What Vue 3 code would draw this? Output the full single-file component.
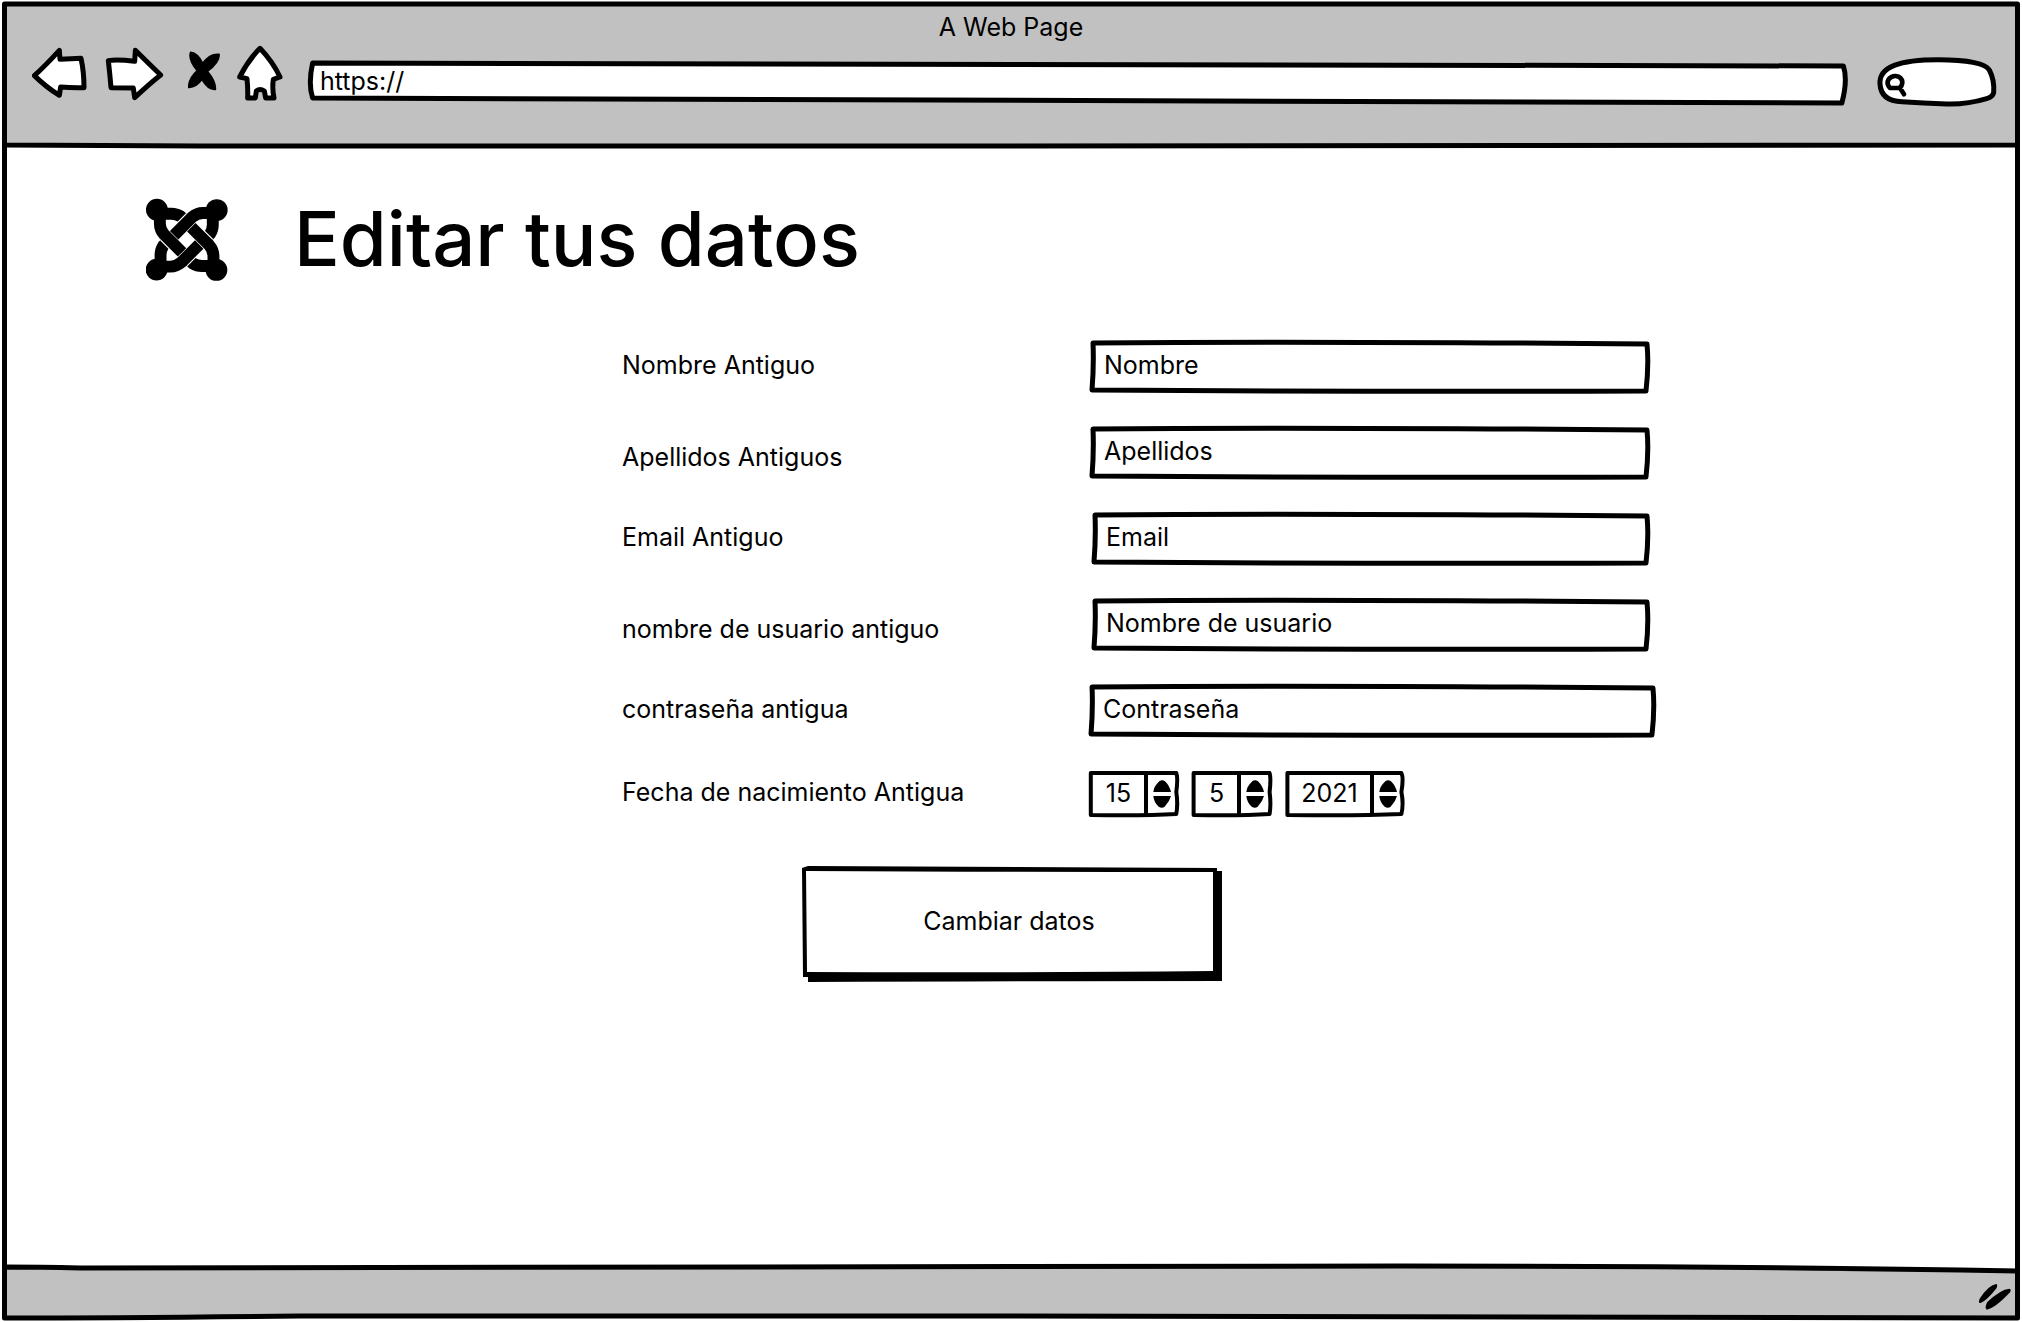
<script setup>
import { reactive } from 'vue'

const fields = [
  { id: 'nombre', label: 'Nombre Antiguo', hint: 'Nombre', type: 'text', size: 'medium' },
  { id: 'apellidos', label: 'Apellidos Antiguos', hint: 'Apellidos', type: 'text', size: 'medium' },
  { id: 'email', label: 'Email Antiguo', hint: 'Email', type: 'email', size: 'small' },
  { id: 'usuario', label: 'nombre de usuario antiguo', hint: 'Nombre de usuario', type: 'text', size: 'small' },
  { id: 'contrasena', label: 'contraseña antigua', hint: 'Contraseña', type: 'password', size: 'large' },
]

const form = reactive({ nombre: '', apellidos: '', email: '', usuario: '', contrasena: '' })

const dateParts = reactive([
  { id: 'dia', name: 'Día', value: 15 },
  { id: 'mes', name: 'Mes', value: 5 },
  { id: 'anio', name: 'Año', value: 2021 },
])

const turns = [0, 90, 180, 270]
</script>

<template>
  <div class="window">
    <header class="chrome">
      <svg class="sketch" viewBox="0 0 4044 148" preserveAspectRatio="none" aria-hidden="true">
        <path class="bar" d="M9 4H4035V145Q2800 147 2020 146Q1000 147 400 146L9 145Z" />
        <path class="line" d="M9 140V148M4035 140V148" />
      </svg>
      <p class="title">A Web Page</p>
      <nav class="toolbar" aria-label="Navegador">
        <button class="tool" type="button" aria-label="Atrás">
          <svg width="56" height="64" viewBox="96 132 168 192">
            <path class="glyph" d="M103 227Q135 198 178 151L180 178Q215 176 243 175Q252 215 252 263Q215 264 182 261L178 286Q140 263 103 227Z" />
          </svg>
        </button>
        <button class="tool" type="button" aria-label="Adelante">
          <svg width="60" height="64" viewBox="312 132 180 192">
            <path class="glyph" d="M325 182Q350 177 404 184L406 151Q445 190 482 225Q450 250 404 293L400 264L333 263Q330 225 325 182Z" />
          </svg>
        </button>
        <button class="tool stop" type="button" aria-label="Detener">
          <svg width="32" height="64" viewBox="564 132 96 192">
            <path class="cross" d="M572 157Q594 160 608 190Q630 160 657 163Q660 186 622 214Q648 245 646 268Q624 270 606 238Q588 263 566 262Q566 235 592 212Q564 178 572 157Z" />
          </svg>
        </button>
        <button class="tool" type="button" aria-label="Inicio">
          <svg width="48" height="64" viewBox="708 132 144 192">
            <path class="glyph" d="M780 145Q818 185 840 231L820 238Q816 265 822 294H797L793 273Q780 264 769 273L766 294H743Q744 265 741 236L719 231Q745 180 780 145Z" />
          </svg>
        </button>
        <label class="address">
          <svg class="sketch" viewBox="0 0 1000 64" preserveAspectRatio="none" aria-hidden="true">
            <path class="frame" d="M3 19Q400 19 997 22Q1000 36 996 59Q500 57 3 54Q0 40 3 19Z" />
          </svg>
          <input type="text" value="https://" aria-label="Dirección" />
        </label>
        <label class="search">
          <svg class="sketch" viewBox="228 132 366 192" aria-hidden="true">
            <path class="glyph" d="M240 252C236 200 300 179 415 179C500 179 556 190 568 210Q584 240 581 278Q578 291 560 296Q500 314 440 312Q370 309 306 305C262 304 242 285 240 252Z" />
            <path class="lens" d="M300 264L312 283M270 264Q258 250 266 238Q275 227 287 228Q305 230 307 246Q306 262 296 264Z" />
          </svg>
          <input type="search" aria-label="Buscar" />
        </label>
      </nav>
    </header>

    <main class="page">
      <div class="heading">
        <svg class="logo" viewBox="78 57 248 249" aria-hidden="true">
          <g class="under">
            <path v-for="t in turns" :key="t" :transform="`rotate(${t} 201 181)`" d="M111 102H155Q170 102 183 110L197 124" />
          </g>
          <g class="gap">
            <path v-for="t in turns" :key="t" :transform="`rotate(${t} 201 181)`" d="M136 168L187 219" />
          </g>
          <g class="over">
            <path v-for="t in turns" :key="t" :transform="`rotate(${t} 201 181)`" d="M120 95V132Q120 150 133 165L187 219" />
          </g>
          <circle v-for="t in turns" :key="t" :transform="`rotate(${t} 201 181)`" cx="111" cy="90" r="33" />
        </svg>
        <h1>Editar tus datos</h1>
      </div>

      <form class="form" @submit.prevent>
        <div v-for="f in fields" :key="f.id" class="row">
          <label class="caption" :for="f.id">{{ f.label }}</label>
          <div class="field" :class="f.size">
            <svg class="sketch" viewBox="0 0 560 54" preserveAspectRatio="none" aria-hidden="true">
              <path class="frame" d="M3 3Q200 1 557 4Q559 25 556 51Q280 52 2 50Q4 25 3 3Z" />
            </svg>
            <input :id="f.id" v-model="form[f.id]" :type="f.type" :placeholder="f.hint" />
          </div>
        </div>

        <div class="row">
          <label class="caption" for="dia">Fecha de nacimiento Antigua</label>
          <div class="date">
            <div v-for="p in dateParts" :key="p.id" class="spinner" :class="p.id">
              <svg class="sketch" viewBox="0 0 100 48" preserveAspectRatio="none" aria-hidden="true">
                <path class="frame thin" d="M2 3H97Q99 8 97 22Q99 34 97 44Q60 46 2 45Z" />
              </svg>
              <input :id="p.id" v-model.number="p.value" type="text" inputmode="numeric" :aria-label="p.name" />
              <div class="steps">
                <button type="button" :aria-label="p.name + ': más'" @click="p.value++">
                  <svg width="18" height="12" viewBox="0 0 54 36"><path d="M1 36Q2 20 19 4Q27 -3 36 4Q50 18 54 36Z" /></svg>
                </button>
                <button type="button" :aria-label="p.name + ': menos'" @click="p.value--">
                  <svg width="18" height="12" viewBox="0 0 54 36"><path d="M1 0H54Q50 16 35 32Q27 38 17 32Q3 20 1 0Z" /></svg>
                </button>
              </div>
            </div>
          </div>
        </div>

        <button class="submit" type="submit">
          <svg class="sketch" viewBox="0 0 414 110" preserveAspectRatio="none" aria-hidden="true">
            <path d="M6 5H420V115Q200 115 6 116Z" />
            <path d="M0 2L6 0Q200 1 415 2V111H1Z" />
            <path class="face" d="M4 5Q200 6 411 6V105Q200 107 5 106Z" />
          </svg>
          <span>Cambiar datos</span>
        </button>
      </form>
    </main>

    <footer class="status">
      <svg class="sketch" viewBox="0 0 4044 58" preserveAspectRatio="none" aria-hidden="true">
        <path class="bar" d="M9 3Q80 3 160 4Q2000 1 2800 2Q3500 2 4035 7V54Q3000 52 2000 52Q1200 51 600 52Q240 54 9 54Z" />
        <path class="line" d="M9 0V8M4035 0V12" />
      </svg>
      <svg class="grip" width="38" height="28" viewBox="288 126 114 84" aria-hidden="true">
        <path d="M348 132Q325 136 299 176Q293 190 302 189Q320 182 350 144Q354 133 348 132Z" />
        <path d="M388 146Q362 148 322 186Q313 202 320 209Q345 205 390 157Q395 148 388 146Z" />
      </svg>
    </footer>
  </div>
</template>

<style>
body {
  margin: 0;
  background: #fff;
}
</style>

<style scoped>
.window {
  display: flex;
  flex-direction: column;
  min-height: 100vh;
  color: #000;
  font: 400 25px/34px Inter, "Liberation Sans", sans-serif;
}

.window *,
.window {
  box-sizing: border-box;
}

input,
button {
  margin: 0;
  padding: 0;
  border: 0;
  background: none;
  color: inherit;
  font: inherit;
}

button {
  cursor: pointer;
}

input {
  position: relative;
  display: block;
  width: 100%;
  height: 100%;
  outline: 0;
}

input::placeholder {
  color: #000;
  opacity: 1;
}

svg {
  display: block;
}

.sketch {
  position: absolute;
  inset: 0;
  width: 100%;
  height: 100%;
  overflow: visible;
}

.bar,
.line,
.frame {
  fill: #fff;
  stroke: #000;
  stroke-width: 5px;
  stroke-linejoin: round;
  vector-effect: non-scaling-stroke;
}

.bar {
  fill: #c1c1c1;
}

.line {
  fill: none;
}

.thin {
  stroke-width: 4px;
}

.glyph {
  fill: #fff;
  stroke: #000;
  stroke-width: 15px;
  stroke-linejoin: round;
}

.cross {
  stroke: #000;
  stroke-width: 5px;
  stroke-linejoin: round;
}

.lens {
  fill: none;
  stroke: #000;
  stroke-width: 14px;
  stroke-linecap: round;
  stroke-linejoin: round;
}

.chrome {
  position: relative;
  padding: 10px 24px 40px 32px;
}

.title {
  position: relative;
  margin: 0 0 0 -8px;
  text-align: center;
}

.toolbar {
  position: relative;
  display: flex;
  gap: 16px;
}

.stop {
  margin-left: 8px;
}

.address {
  position: relative;
  flex: 1;
  height: 64px;
  margin: 0 12px 0 8px;
}

.address input {
  padding: 10px 12px 0;
}

.search {
  position: relative;
  width: 122px;
  height: 64px;
}

.search input {
  padding: 10px 12px 0 36px;
}

.page {
  flex: 1;
  margin: 0 2px;
  padding: 50px 0 32px;
  border: solid #000;
  border-width: 0 5px;
}

.heading {
  display: flex;
  align-items: center;
  gap: 66px;
  padding-left: 139px;
}

.logo {
  width: 82px;
  height: 84px;
}

.under,
.over,
.gap {
  fill: none;
  stroke: #000;
  stroke-width: 36px;
}

.gap {
  stroke: #fff;
  stroke-width: 43px;
}

h1 {
  margin: 0;
  padding-bottom: 4px;
  font-size: 76px;
  font-weight: 500;
  line-height: 80px;
}

.form {
  display: flex;
  flex-direction: column;
  gap: 32px;
  margin-top: 58px;
}

.row {
  display: grid;
  grid-template-columns: minmax(0, 615fr) minmax(0, 467fr) minmax(0, 567fr) minmax(0, 359fr);
}

.caption {
  grid-column: 2;
  align-self: center;
  padding-bottom: 4px;
}

.row:nth-child(-2n + 4) .caption {
  padding: 8px 0 0;
}

.field {
  position: relative;
  grid-column: 3;
  height: 54px;
}

.field input {
  padding: 0 14px 4px;
}

.medium {
  margin: 0 6px 0 1px;
}

.small {
  margin: 0 6px 0 3px;
}

.date {
  grid-column: 3;
  display: flex;
  gap: 13px;
}

.spinner {
  position: relative;
  display: flex;
  width: 90px;
  height: 48px;
}

.mes {
  width: 80px;
}

.anio {
  width: 120px;
}

.spinner input {
  flex: 1;
  min-width: 0;
  padding: 0 0 2px 4px;
  text-align: center;
}

.steps {
  position: relative;
  display: flex;
  flex-direction: column;
  align-items: center;
  justify-content: center;
  gap: 4px;
  width: 35px;
  margin: 2px 0;
  padding-right: 4px;
  border-left: 4px solid #000;
}

.submit {
  position: relative;
  align-self: center;
  width: 414px;
  height: 110px;
  margin: 16px 4px 0 0;
}

.submit span {
  position: relative;
}

.face {
  fill: #fff;
}

.status {
  position: relative;
  display: flex;
  justify-content: flex-end;
  height: 58px;
  padding: 18px 8px 0 0;
}

.grip {
  position: relative;
}
</style>
